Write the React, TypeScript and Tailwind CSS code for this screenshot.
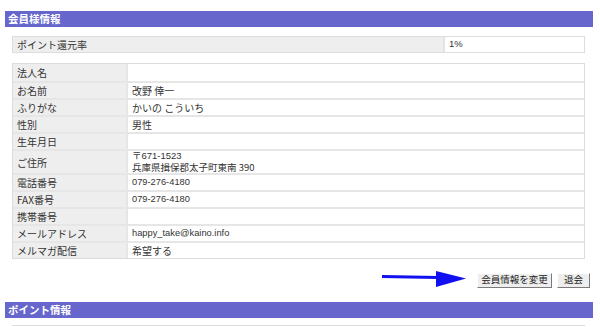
import React from "react";

const jp = { fontFamily: '"Noto Sans CJK JP", "Noto Sans", sans-serif' };
const lat = { fontFamily: '"Liberation Sans", "Noto Sans CJK JP", sans-serif' };

type Row = { label: string; value?: React.ReactNode; h?: string; small?: boolean };

const rows: Row[] = [
  { label: "法人名" },
  { label: "お名前", value: "改野 倖一" },
  { label: "ふりがな", value: "かいの こういち" },
  { label: "性別", value: "男性" },
  { label: "生年月日" },
  {
    label: "ご住所",
    h: "h-[24px]",
    value: (
      <div className="text-[9.5px] flex flex-col gap-[1px]">
        <div className="leading-[10px]" style={lat}>〒671-1523</div>
        <div className="leading-[11px]">兵庫県揖保郡太子町東南 390</div>
      </div>
    ),
  },
  { label: "電話番号", value: "079-276-4180", small: true },
  { label: "FAX番号", value: "079-276-4180", small: true },
  { label: "携帯番号" },
  { label: "メールアドレス", value: "happy_take@kaino.info", small: true },
  { label: "メルマガ配信", value: "希望する" },
];

function Header({ title }: { title: string }) {
  return (
    <div className="h-[16px] w-[588px] bg-[#6666cc] flex items-center pl-[3px]">
      <span className="text-white font-bold text-[10.5px] leading-none" style={jp}>
        {title}
      </span>
    </div>
  );
}

function Btn({ children, w }: { children: React.ReactNode; w: string }) {
  return (
    <div
      className={`${w} h-[15px] bg-[#eeeeee] border border-t-[#ffffff] border-l-[#ffffff] border-r-[#7a7a7a] border-b-[#7a7a7a] flex items-center justify-center text-[9.5px] text-[#222] leading-none`}
      style={jp}
    >
      {children}
    </div>
  );
}

export default function App() {
  return (
    <div className="w-[600px] h-[327px] bg-white overflow-hidden pt-[11px] pl-[5px] text-[#333]" style={jp}>
      <Header title="会員様情報" />

      <div className="ml-[7px] mt-[9px] w-[573px] h-[17px] border border-[#dddddd] flex text-[10px]">
        <div className="w-[432px] bg-[#eeeeee] border-r-2 border-[#e4e4e4] flex items-center pl-[4px]">
          ポイント還元率
        </div>
        <div className="flex-1 bg-white flex items-center pl-[4px]" style={lat}>
          <span className="text-[9.5px]">1%</span>
        </div>
      </div>

      <div className="ml-[7px] mt-[10px] w-[573px] border border-[#dcdcdc] flex flex-col text-[10px]">
        {rows.map((r, i) => (
          <div
            key={r.label}
            className={`flex ${i === 0 ? "h-[17px]" : "border-t-2 border-[#e6e6e6]"} ${
              i === 0 ? "" : r.h ? "h-[24px]" : "h-[17px]"
            }`}
          >
            <div className="w-[115px] bg-[#eeeeee] border-r-2 border-[#e6e6e6] flex items-center pl-[4px] shrink-0">
              {r.label}
            </div>
            <div className="flex-1 bg-white flex items-center pl-[4px] overflow-hidden">
              {r.small ? (
                <span className="text-[9.3px]" style={lat}>
                  {r.value}
                </span>
              ) : (
                r.value
              )}
            </div>
          </div>
        ))}
      </div>

      <div className="w-[585px] mt-[12px] flex items-center justify-end">
        <svg width="86" height="18" viewBox="0 0 86 18" className="mr-[10px]">
          <path d="M1 5.5 L57 6.5" stroke="#1010f0" strokeWidth="3" fill="none" />
          <path d="M55 0 L85 7.5 L55 16 Z" fill="#1010f0" />
        </svg>
        <Btn w="w-[75px]">会員情報を変更</Btn>
        <div className="w-[5px]" />
        <Btn w="w-[33px]">退会</Btn>
      </div>

      <div className="mt-[13px]">
        <Header title="ポイント情報" />
      </div>
      <div className="ml-[7px] mt-[7px] w-[573px] h-[10px] border-t border-[#dcdcdc]" />
    </div>
  );
}
